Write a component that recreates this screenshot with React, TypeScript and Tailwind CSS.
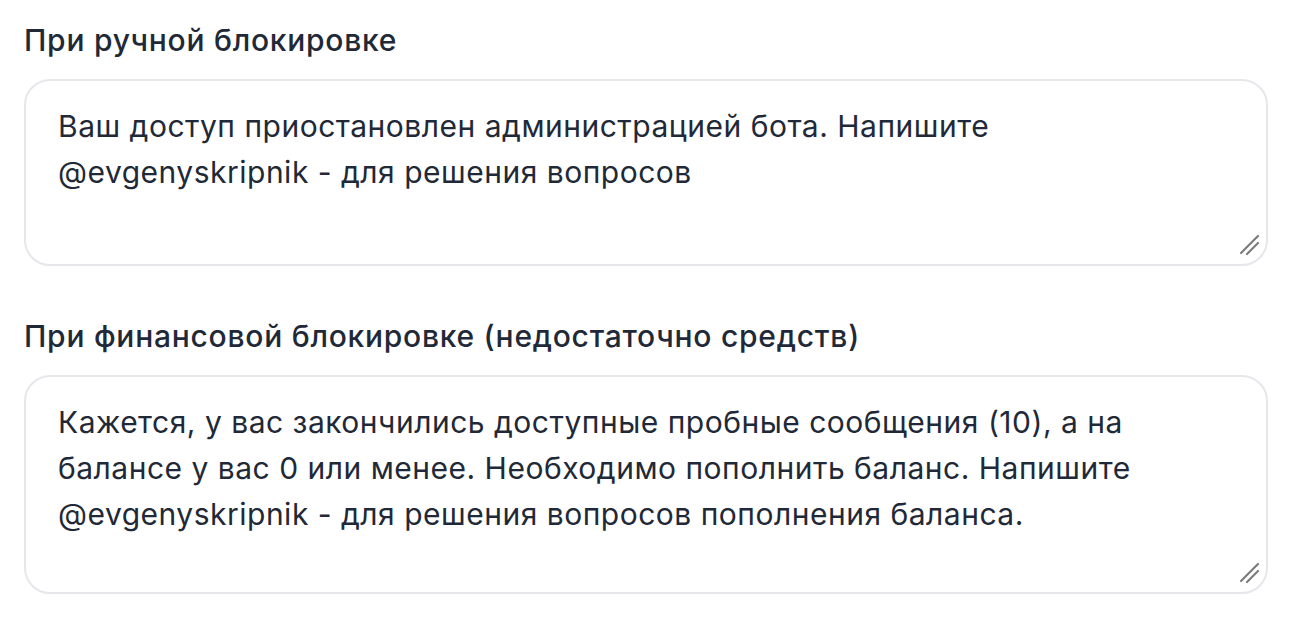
import React from 'react';

type FieldProps = {
  label: string;
  value: string;
  height: string;
};

const ResizeHandle: React.FC = () => (
  <svg
    width="22"
    height="22"
    viewBox="0 0 22 22"
    className="pointer-events-none absolute bottom-[10px] right-[8px]"
  >
    <line x1="3" y1="19" x2="20" y2="2" stroke="#7b7b7b" strokeWidth="2.2" strokeLinecap="round" />
    <line x1="9" y1="20" x2="20" y2="9" stroke="#7b7b7b" strokeWidth="2.2" strokeLinecap="round" />
  </svg>
);

const Field: React.FC<FieldProps> = ({ label, value, height }) => {
  return (
    <div className="flex flex-col gap-[19px]">
      <label className="text-[30px] leading-[40px] font-medium tracking-[0.75px] text-[#1f2937]">{label}</label>
      <div className={`relative ${height}`}>
        <textarea
          readOnly
          defaultValue={value}
          className="h-full w-full resize-none rounded-[26px] border-2 border-[#e5e7eb] bg-white px-[32px] py-[22px] text-[30px] leading-[46px] tracking-[0.5px] text-[#1f2937] outline-none"
        />
        <ResizeHandle />
      </div>
    </div>
  );
};

export default function App() {
  return (
    <div className="min-h-screen bg-white pl-[24px] pt-[20px] font-['Inter',sans-serif]">
      <div className="flex w-[1244px] flex-col gap-[50px]">
        <Field
          label="При ручной блокировке"
          value="Ваш доступ приостановлен администрацией бота. Напишите @evgenyskripnik - для решения вопросов"
          height="h-[187px]"
        />
        <Field
          label="При финансовой блокировке (недостаточно средств)"
          value="Кажется, у вас закончились доступные пробные сообщения (10), а на балансе у вас 0 или менее. Необходимо пополнить баланс. Напишите @evgenyskripnik - для решения вопросов пополнения баланса."
          height="h-[219px]"
        />
      </div>
    </div>
  );
}
